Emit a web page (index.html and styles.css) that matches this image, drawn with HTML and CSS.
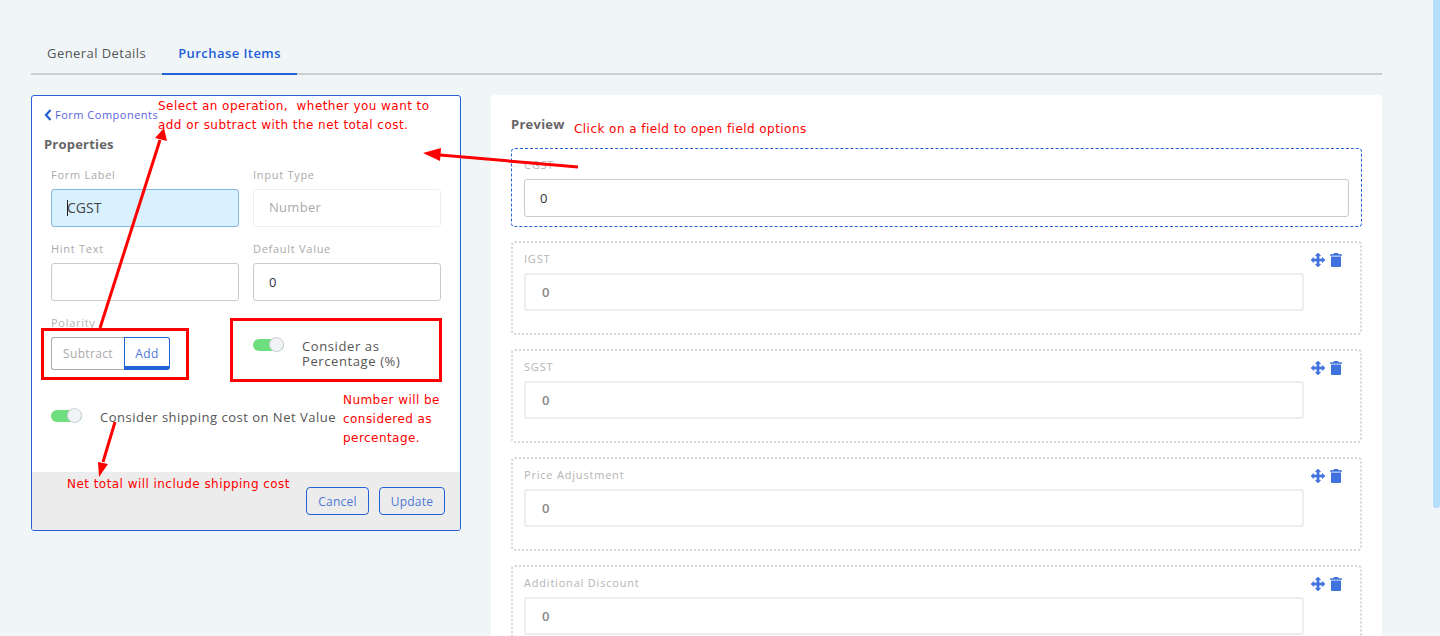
FILE: index.html
```html
<!DOCTYPE html>
<html lang="en">
<head>
<meta charset="utf-8">
<title>Purchase Items</title>
<link rel="stylesheet" href="styles.css">
</head>
<body>
<div class="page">
  <nav class="tabs">
    <a class="tab">General Details</a>
    <a class="tab tab-active">Purchase Items</a>
  </nav>
  <div class="columns">
    <section class="props">
      <div class="props-body">
        <a class="back"><svg class="chev" viewBox="0 0 8 12"><path d="M6.5 1 2 6l4.500 5" fill="none" stroke="currentColor" stroke-width="2.200"/></svg>Form Components</a>
        <h3 class="props-title">Properties</h3>
        <div class="form-grid">
          <div class="field"><label class="lbl">Form Label</label><div class="inp inp-focus"><span class="caret"></span>CGST</div></div>
          <div class="field"><label class="lbl">Input Type</label><div class="inp inp-disabled">Number</div></div>
          <div class="field"><label class="lbl">Hint Text</label><div class="inp"></div></div>
          <div class="field"><label class="lbl">Default Value</label><div class="inp inp-num">0</div></div>
          <div class="field"><label class="lbl lbl-polarity">Polarity</label>
            <div class="seg"><span class="seg-a">Subtract</span><span class="seg-b">Add</span></div>
          </div>
          <div class="pct">
            <span class="toggle"><span class="knob"></span></span>
            <span class="pct-text">Consider as<br>Percentage (%)</span>
          </div>
        </div>
        <div class="ship">
          <span class="toggle"><span class="knob"></span></span>
          <span class="ship-text">Consider shipping cost on Net Value</span>
        </div>
      </div>
      <footer class="props-foot">
        <button class="btn">Cancel</button>
        <button class="btn">Update</button>
      </footer>
    </section>
    <section class="preview">
      <h3 class="preview-title">Preview</h3>
      <div class="card card-selected">
        <div class="card-lbl">CGST</div>
        <div class="card-inp card-inp-on">0</div>
      </div>
      <div class="card">
        <div class="card-main"><div class="card-lbl">IGST</div><div class="card-inp">0</div></div>
        <div class="tools">
          <svg class="ico ico-move" viewBox="0 0 14 14"><path d="M7 0 9.600 2.700H8V6h3.300V4.400L14 7l-2.700 2.600V8H8v3.300h1.600L7 14l-2.600-2.700H6V8H2.700v1.600L0 7l2.700-2.600V6H6V2.700H4.400z"/></svg>
          <svg class="ico" viewBox="0 0 12 14"><path d="M4 0h4l.7 1.300H12v1.500H0V1.300h3.300zM1 3.600h10V13a1 1 0 0 1-1 1H2a1 1 0 0 1-1-1z"/></svg>
        </div>
      </div>
      <div class="card">
        <div class="card-main"><div class="card-lbl">SGST</div><div class="card-inp">0</div></div>
        <div class="tools">
          <svg class="ico ico-move" viewBox="0 0 14 14"><path d="M7 0 9.600 2.700H8V6h3.300V4.400L14 7l-2.700 2.600V8H8v3.300h1.600L7 14l-2.600-2.700H6V8H2.700v1.600L0 7l2.700-2.600V6H6V2.700H4.400z"/></svg>
          <svg class="ico" viewBox="0 0 12 14"><path d="M4 0h4l.7 1.300H12v1.500H0V1.300h3.300zM1 3.600h10V13a1 1 0 0 1-1 1H2a1 1 0 0 1-1-1z"/></svg>
        </div>
      </div>
      <div class="card">
        <div class="card-main"><div class="card-lbl">Price Adjustment</div><div class="card-inp">0</div></div>
        <div class="tools">
          <svg class="ico ico-move" viewBox="0 0 14 14"><path d="M7 0 9.600 2.700H8V6h3.300V4.400L14 7l-2.700 2.600V8H8v3.300h1.600L7 14l-2.600-2.700H6V8H2.700v1.600L0 7l2.700-2.600V6H6V2.700H4.400z"/></svg>
          <svg class="ico" viewBox="0 0 12 14"><path d="M4 0h4l.7 1.300H12v1.500H0V1.300h3.300zM1 3.600h10V13a1 1 0 0 1-1 1H2a1 1 0 0 1-1-1z"/></svg>
        </div>
      </div>
      <div class="card">
        <div class="card-main"><div class="card-lbl">Additional Discount</div><div class="card-inp">0</div></div>
        <div class="tools">
          <svg class="ico ico-move" viewBox="0 0 14 14"><path d="M7 0 9.600 2.700H8V6h3.300V4.400L14 7l-2.700 2.600V8H8v3.300h1.600L7 14l-2.600-2.700H6V8H2.700v1.600L0 7l2.700-2.600V6H6V2.700H4.400z"/></svg>
          <svg class="ico" viewBox="0 0 12 14"><path d="M4 0h4l.7 1.300H12v1.500H0V1.300h3.300zM1 3.600h10V13a1 1 0 0 1-1 1H2a1 1 0 0 1-1-1z"/></svg>
        </div>
      </div>
    </section>
  </div>

  <svg class="arrows" viewBox="0 0 1440 636">
    <g fill="none" stroke="#f00" stroke-width="3">
      <path d="M100 328 160 140"/>
      <path d="M578 167 440 155"/>
      <path d="M115 422 103 462"/>
    </g>
    <g fill="#f00">
      <path d="M164 128 167 141 155 138z"/>
      <path d="M423 153 441 148 440 161z"/>
      <path d="M99 477 98 462 108 464z"/>
    </g>
  </svg>
  <div class="box box-polarity"></div>
  <div class="box box-pct"></div>
  <p class="note note-op">Select an operation,&nbsp; whether you want to<br>add or subtract with the net total cost.</p>
  <p class="note note-click">Click on a field to open field options</p>
  <p class="note note-num">Number will be<br>considered as<br>percentage.</p>
  <p class="note note-ship">Net total will include shipping cost</p>
  <div class="thumb"></div>
</div>
</body>
</html>
```
FILE: styles.css
```css
* { box-sizing: border-box; }
html, body { margin: 0; height: 636px; overflow: hidden; }
body { background: #f0f5f8; font-family: "Open Sans", "Noto Sans", sans-serif; color: #555; }
.page { position: relative; width: 1440px; height: 636px; overflow: hidden; padding: 32px 58px 0 31px; }

.tabs { display: flex; height: 43px; border-bottom: 2px solid #c9cfd2; }
.tab { padding: 12px 16px 0; height: 43px; font-size: 13px; line-height: 18px; letter-spacing: .44px; color: #555; }
.tab-active { color: #2460d6; font-weight: 600; border-bottom: 2px solid #2460d6; }

.columns { display: flex; gap: 30px; margin-top: 20px; align-items: flex-start; }

.props { width: 430px; height: 436px; background: #fff; border: 1px solid #2460d6; border-radius: 3px; display: flex; flex-direction: column; overflow: hidden; }
.props-body { flex: 1; padding: 11px 19px 0 12px; }
.back { display: flex; align-items: center; height: 15px; font-size: 11px; letter-spacing: .5px; color: #5a63d8; }
.chev { width: 8px; height: 12px; margin-right: 3px; color: #2460d6; }
.props-title { margin: 13px 0 0; font-size: 13px; line-height: 18px; font-weight: 700; color: #666; letter-spacing: .2px; }
.form-grid { display: grid; grid-template-columns: 188px 188px; column-gap: 14px; margin: 14px 0 0 7px; }
.field { height: 74px; }
.lbl { display: block; height: 16px; margin-bottom: 6px; font-size: 11px; line-height: 16px; letter-spacing: .72px; color: #aaa; }
.lbl-polarity { margin: 1px 0 7px; color: #b4b4b4; height: 14px; line-height: 14px; }
.inp { height: 38px; border: 1px solid #c7cccc; border-radius: 3px; padding: 0 15px; font-size: 14px; line-height: 36px; color: #333; background: #fff; }
.inp-focus { position: relative; background: #d9f0fe; border-color: #86b5de; color: #444; }
.caret { position: absolute; left: 15px; top: 10px; width: 1px; height: 16px; background: #222; }
.inp-disabled { border-color: #eee; color: #aaa; font-size: 13px; letter-spacing: .3px; line-height: 34px; }
.inp-num { color: #334; font-size: 13px; }
.seg { display: flex; width: 119px; height: 33px; font-size: 12px; line-height: 32px; text-align: center; letter-spacing: .35px; }
.seg-a { width: 73px; border: 1px solid #aaa; border-right: 0; border-radius: 3px 0 0 3px; color: #aaa; }
.seg-b { width: 46px; border: 1px solid #2460d6; border-bottom: 4px solid #2460d6; border-radius: 0 3px 3px 0; color: #4f78d8; line-height: 32px; }
.pct { display: flex; align-items: flex-start; height: 60px; }
.pct .toggle { margin-top: 24px; }
.pct-text { margin: 24px 0 0 18px; font-size: 13px; line-height: 15px; letter-spacing: .6px; color: #555; }
.toggle { position: relative; display: block; flex: none; width: 31px; height: 12px; border-radius: 6px; background: #6ede7e; }
.knob { position: absolute; right: 0; top: -2px; width: 15px; height: 15px; border-radius: 50%; background: #f2f3f5; border: 1px solid #ccd; }
.ship { display: flex; align-items: center; margin: 20px 0 0 7px; height: 16px; }
.ship .toggle { margin-top: -3px; }
.ship-text { margin-left: 18px; font-size: 13px; letter-spacing: .5px; color: #555; white-space: nowrap; }
.props-foot { height: 58px; background: #ececec; display: flex; justify-content: flex-end; gap: 10px; padding: 15px 15px 0 0; }
.btn { height: 28px; padding: 1px 0 0; width: 63px; background: transparent; border: 1px solid #2460d6; border-radius: 4px; color: #4f78d8; font: 12px/26px "Open Sans", sans-serif; letter-spacing: .2px; }
.btn:last-child { width: 66px; }

.preview { width: 891px; height: 600px; background: #fff; border-radius: 4px; padding: 20px 20px 0; }
.preview-title { margin: 0 0 15px; height: 18px; font-size: 13px; line-height: 18px; font-weight: 700; color: #666; letter-spacing: .25px; }
.card { display: flex; height: 94px; margin-bottom: 14px; padding: 7px 11px; border: 2px dotted #d6d6d6; border-radius: 4px; }
.card-selected { display: block; height: 79px; padding: 7px 12px; border: 1px dashed #2460d6; }
.card-main { width: 780px; flex: none; }
.card-lbl { height: 23px; font-size: 11px; line-height: 18px; letter-spacing: .8px; color: #b4b4b4; }
.card-inp { height: 38px; border: 2px solid #eee; border-radius: 3px; padding: 0 16px; font-size: 13px; line-height: 34px; font-weight: 600; color: #888; }
.card-inp-on { border: 1px solid #c7cccc; padding: 0 15px; line-height: 36px; font-weight: 400; color: #333; }
.tools { display: flex; gap: 5px; margin: 3px 0 0 7px; }
.ico { width: 14px; height: 14px; fill: #3f72dc; }
.ico:last-child { width: 12px; }
.ico-move { stroke: #3f72dc; stroke-width: .7; stroke-linejoin: round; overflow: visible; }

.arrows { position: absolute; left: 0; top: 0; width: 1440px; height: 636px; pointer-events: none; }
.box { position: absolute; border: 3px solid #f00; }
.box-polarity { left: 41px; top: 328px; width: 148px; height: 52px; }
.box-pct { left: 230px; top: 318px; width: 212px; height: 64px; }
.note { position: absolute; margin: 0; font-family: "DejaVu Sans", sans-serif; font-size: 12px; line-height: 19px; letter-spacing: .45px; color: #f00; white-space: nowrap; }
.note-op { left: 158px; top: 97px; }
.note-click { left: 574px; top: 120px; }
.note-num { left: 343px; top: 391px; }
.note-ship { left: 67px; top: 475px; }
.thumb { position: absolute; left: 1433px; top: 0; width: 7px; height: 508px; background: #b3defc; border-radius: 0 0 3px 3px; }
```
